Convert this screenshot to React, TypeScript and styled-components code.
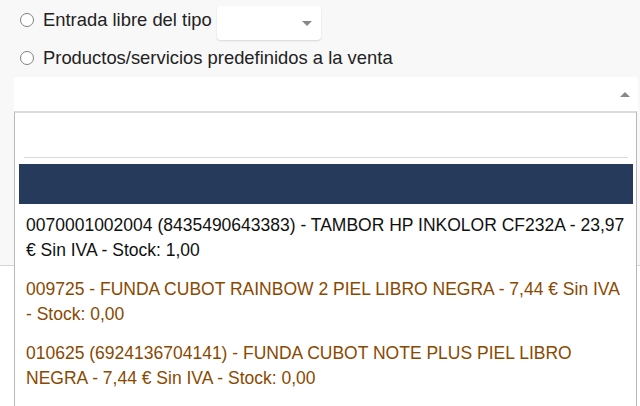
import React from "react";
import styled, { createGlobalStyle } from "styled-components";

const GlobalStyle = createGlobalStyle`
  html, body {
    margin: 0;
    padding: 0;
    background: #fff;
    font-family: "Liberation Sans", Arial, sans-serif;
  }
`;

const Page = styled.div`
  min-height: 406px;
  background: #fff;
`;

const FormSection = styled.div`
  box-sizing: border-box;
  height: 266px;
  padding: 6px 2px 0 14px;
  background: #f8f8f8;
  border-bottom: 1px solid #d6d6d6;
`;

const OptionRow = styled.label`
  display: flex;
  align-items: flex-start;
  margin-bottom: 4px;
  font-size: 18.4px;
  line-height: 27px;
  color: #222;
`;

const Radio = styled.input.attrs({ type: "radio" })`
  appearance: none;
  box-sizing: border-box;
  flex: none;
  width: 14px;
  height: 14px;
  margin: 7px 9px 0 6px;
  border: 1.5px solid #808080;
  border-radius: 50%;
  background: #fff;
`;

const MiniSelect = styled.div`
  box-sizing: border-box;
  width: 104px;
  height: 34px;
  margin-left: 5px;
  padding-right: 9px;
  display: flex;
  align-items: center;
  justify-content: flex-end;
  background: #fff;
  border-radius: 4px;
  box-shadow: 0 1px 2px rgba(0, 0, 0, 0.14);
`;

const Caret = styled.span<{ $up?: boolean }>`
  width: 0;
  height: 0;
  border-left: 5px solid transparent;
  border-right: 5px solid transparent;
  ${(p) =>
    p.$up ? "border-bottom: 5px solid #888;" : "border-top: 5px solid #888;"}
`;

const Combo = styled.div`
  position: relative;
  margin-top: 6px;
`;

const ComboBox = styled.div`
  box-sizing: border-box;
  height: 34px;
  padding-right: 8px;
  display: flex;
  align-items: center;
  justify-content: flex-end;
  background: #fff;
  border-radius: 3px 3px 0 0;
`;

const Dropdown = styled.div`
  position: absolute;
  top: 100%;
  left: 0;
  right: 1px;
  z-index: 10;
  height: 300px;
  background: #fff;
  border: 1px solid #b8b8b8;
  border-top: 2px solid #dcdcdc;
`;

const SearchInput = styled.input`
  display: block;
  box-sizing: border-box;
  width: calc(100% - 17px);
  height: 45px;
  margin: 0 8px 0 9px;
  padding: 0 4px;
  border: none;
  border-bottom: 1px solid #d9d9d9;
  outline: none;
  font: inherit;
  font-size: 16px;
`;

const GroupHeader = styled.div`
  height: 40px;
  margin: 6px 3px 0 4px;
  background: #263b5c;
`;

const OptionList = styled.ul`
  list-style: none;
  margin: 0;
  padding: 2px 0 0;
`;

const OptionItem = styled.li<{ $muted?: boolean }>`
  padding: 7px 7px 7px 11px;
  font-size: 17.5px;
  line-height: 25px;
  color: ${(p) => (p.$muted ? "#8a4900" : "#111")};
`;

const products = [
  {
    text: "0070001002004 (8435490643383) - TAMBOR HP INKOLOR CF232A - 23,97 € Sin IVA - Stock: 1,00",
    stock: 1,
  },
  {
    text: "009725 - FUNDA CUBOT RAINBOW 2 PIEL LIBRO NEGRA - 7,44 € Sin IVA - Stock: 0,00",
    stock: 0,
  },
  {
    text: "010625 (6924136704141) - FUNDA CUBOT NOTE PLUS PIEL LIBRO NEGRA - 7,44 € Sin IVA - Stock: 0,00",
    stock: 0,
  },
];

const App = () => {
  return (
    <Page>
      <GlobalStyle />
      <FormSection>
        <OptionRow>
          <Radio name="linea" />
          <span>Entrada libre del tipo</span>
          <MiniSelect>
            <Caret />
          </MiniSelect>
        </OptionRow>
        <OptionRow>
          <Radio name="linea" />
          <span>Productos/servicios predefinidos a la venta</span>
        </OptionRow>
        <Combo>
          <ComboBox>
            <Caret $up />
          </ComboBox>
          <Dropdown>
            <SearchInput />
            <GroupHeader />
            <OptionList>
              {products.map((p) => (
                <OptionItem key={p.text} $muted={p.stock <= 0}>
                  {p.text}
                </OptionItem>
              ))}
            </OptionList>
          </Dropdown>
        </Combo>
      </FormSection>
    </Page>
  );
};

export default App;
